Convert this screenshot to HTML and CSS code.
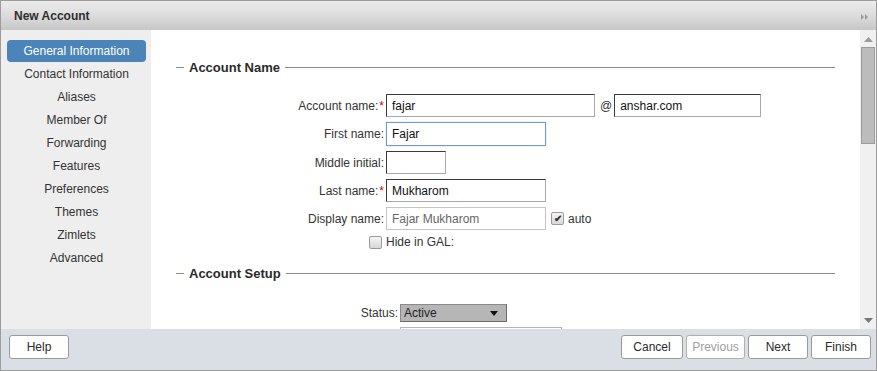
FILE: index.html
```
<!DOCTYPE html>
<html lang="en">
<head>
    <meta charset="UTF-8">
    <title>New Account</title>
    <link rel="stylesheet" href="styles.css">
</head>
<body>

    <div class="dialog">
        <!-- Title bar -->
        <div class="titlebar">
            <span class="title">New Account</span>
            <svg class="collapse" width="8" height="6" viewBox="0 0 8 6">
                <polygon points="0,0 3,3 0,6" fill="#9a9a9a"/>
                <polygon points="4,0 7,3 4,6" fill="#9a9a9a"/>
            </svg>
        </div>

        <div class="main">
            <!-- Wizard steps -->
            <ul class="steps">
                <li class="active">General Information</li>
                <li>Contact Information</li>
                <li>Aliases</li>
                <li>Member Of</li>
                <li>Forwarding</li>
                <li>Features</li>
                <li>Preferences</li>
                <li>Themes</li>
                <li>Zimlets</li>
                <li>Advanced</li>
            </ul>

            <div class="content">
                <div class="section-title"><span>Account Name</span></div>
                <div class="form-grid">
                    <label>Account name:<em>*</em></label>
                    <div class="field">
                        <input class="text w210" value="fajar">
                        <span class="at">@</span>
                        <input class="text w147" value="anshar.com">
                    </div>

                    <label>First name:</label>
                    <div class="field"><input class="text w160 focused" value="Fajar"></div>

                    <label>Middle initial:</label>
                    <div class="field"><input class="text w60" value=""></div>

                    <label>Last name:<em>*</em></label>
                    <div class="field"><input class="text w160" value="Mukharom"></div>

                    <label>Display name:</label>
                    <div class="field">
                        <input class="text w160 readonly" value="Fajar Mukharom">
                        <span class="check checked">&#10004;</span>
                        <span class="check-label">auto</span>
                    </div>

                    <div class="check-cell"><span class="check"></span></div>
                    <div class="field"><span class="plain">Hide in GAL:</span></div>
                </div>

                <div class="section-title setup"><span>Account Setup</span></div>
                <div class="form-grid wide">
                    <label>Status:</label>
                    <div class="field">
                        <div class="select">
                            <span>Active</span>
                            <svg width="8" height="5" viewBox="0 0 8 5"><polygon points="0,0 8,0 4,5" fill="#111"/></svg>
                        </div>
                    </div>

                    <label></label>
                    <div class="field"><input class="text w161 light" value=""></div>
                </div>
            </div>

            <!-- Scrollbar -->
            <div class="scrollbar">
                <svg class="arrow" width="9" height="5" viewBox="0 0 9 5"><polygon points="0,5 9,5 4.5,0" fill="#9a9a9a"/></svg>
                <div class="thumb"></div>
                <div class="track"></div>
                <svg class="arrow" width="9" height="5" viewBox="0 0 9 5"><polygon points="0,0 9,0 4.5,5" fill="#777"/></svg>
            </div>
        </div>

        <!-- Buttons -->
        <div class="footer">
            <button class="btn">Help</button>
            <div class="footer-right">
                <button class="btn w62">Cancel</button>
                <button class="btn w59 disabled">Previous</button>
                <button class="btn w60">Next</button>
                <button class="btn w60">Finish</button>
            </div>
        </div>
    </div>

</body>
</html>
```

FILE: styles.css
```
/* General */
body {
    margin: 0;
    padding: 0;
    font-family: 'Liberation Sans', Arial, sans-serif;
    font-size: 12px;
    color: #333;
    background: #fff;
}
.dialog {
    width: 877px;
    height: 371px;
    box-sizing: border-box;
    border: 1px solid #9c9c9c;
    display: flex;
    flex-direction: column;
    overflow: hidden;
}

/* Title bar */
.titlebar {
    height: 29px;
    flex: none;
    display: flex;
    align-items: center;
    justify-content: space-between;
    padding: 0 13px 0 13px;
    background: linear-gradient(#ececec 0%, #dcdcdc 50%, #c6c6c6 100%);
}
.title {
    font-weight: bold;
    font-size: 12px;
    color: #2e2e2e;
}
.collapse {
    margin-top: 2px;
    margin-right: -6px;
}

/* Main area */
.main {
    height: 299px;
    flex: none;
    display: flex;
}
.steps {
    width: 150px;
    flex: none;
    box-sizing: border-box;
    margin: 0;
    padding: 10px 5px 0 6px;
    list-style: none;
    background-color: #eeeeee;
}
.steps li {
    height: 22px;
    line-height: 22px;
    margin-bottom: 1px;
    text-align: center;
    color: #333;
    border-radius: 4px;
}
.steps li.active {
    background-color: #4a84b8;
    color: #fff;
}

.content {
    flex: 1;
    overflow: hidden;
    padding: 29px 25px 0 25px;
}
.section-title {
    display: flex;
    align-items: center;
    height: 16px;
    font-size: 13px;
    font-weight: bold;
    color: #2a2a2a;
}
.section-title::before {
    content: '';
    width: 8px;
    border-top: 1px solid #8c8c8c;
}
.section-title::after {
    content: '';
    flex: 1;
    border-top: 1px solid #8c8c8c;
}
.section-title span {
    padding: 0 5px;
}
.section-title.setup {
    margin-top: 16px;
}

/* Form rows */
.form-grid {
    display: grid;
    grid-template-columns: 208px auto;
    column-gap: 2px;
    row-gap: 5px;
    margin-top: 19px;
    align-items: center;
}
.form-grid.wide {
    grid-template-columns: 222px auto;
    margin-top: 23px;
}
.form-grid label {
    text-align: right;
    color: #333;
}
.form-grid label em {
    font-style: normal;
    color: #d00;
    margin-left: 1px;
}
.field {
    display: flex;
    align-items: center;
}
.text {
    box-sizing: border-box;
    height: 23px;
    padding: 0 5px;
    margin: 0;
    font-family: 'Liberation Sans', Arial, sans-serif;
    font-size: 12px;
    color: #111;
    background: #fff;
    border: 1px solid;
    border-color: #3a3a3a #a8a8a8 #a8a8a8 #3a3a3a;
    outline: none;
}
.text.focused {
    height: 24px;
    border-color: #6e9ad6;
    box-shadow: 0 0 1px #9ab9e6;
}
.text.readonly {
    color: #666;
    border-color: #c4c4c4;
}
.text.light {
    border-color: #b4b4b4;
}
.w210 { width: 209px; }
.w147 { width: 147px; }
.w160 { width: 160px; }
.w161 { width: 162px; }
.w60 { width: 60px; }
.at {
    margin: 0 2px 0 5px;
    color: #333;
}
.plain {
    color: #333;
}

/* Checkboxes */
.check {
    box-sizing: border-box;
    display: inline-block;
    width: 13px;
    height: 13px;
    border: 1px solid #9a9a9a;
    border-radius: 2px;
    background: linear-gradient(#f4f4f4, #d8d8d8);
    font-size: 10px;
    font-weight: bold;
    line-height: 11px;
    text-align: center;
    color: #333;
}
.field .check {
    margin-left: 5px;
}
.check-label {
    margin-left: 4px;
}
.check-cell {
    display: flex;
    justify-content: flex-end;
    padding-right: 2px;
}

/* Dropdown */
.select {
    box-sizing: border-box;
    width: 107px;
    height: 18px;
    display: flex;
    align-items: center;
    justify-content: space-between;
    padding: 0 8px 0 3px;
    background-color: #b6b6b6;
    border: 1px solid;
    border-color: #8a8a8a #6a6a6a #6a6a6a #8a8a8a;
    color: #222;
}

/* Scrollbar */
.scrollbar {
    width: 16px;
    flex: none;
    display: flex;
    flex-direction: column;
    align-items: center;
    background-color: #f0f0f0;
    padding: 7px 0 6px;
    box-sizing: border-box;
}
.scrollbar .arrow {
    flex: none;
}
.thumb {
    box-sizing: border-box;
    width: 14px;
    height: 97px;
    margin-top: 5px;
    background-color: #bcbcbc;
    border: 1px solid #9c9c9c;
}
.track {
    flex: 1;
}

/* Footer */
.footer {
    flex: 1;
    display: flex;
    justify-content: space-between;
    padding: 6px 5px 0 8px;
    background-color: #dadee5;
}
.footer-right {
    display: flex;
    gap: 3px;
    align-self: flex-start;
}
.btn {
    box-sizing: border-box;
    height: 24px;
    width: 60px;
    padding: 0;
    font-family: 'Liberation Sans', Arial, sans-serif;
    font-size: 12px;
    color: #2a2a2a;
    background-color: #fff;
    border: 1px solid #9a9a9a;
    border-radius: 3px;
    cursor: pointer;
}
.btn.w62 { width: 62px; }
.btn.w59 { width: 59px; }
.btn.w60 { width: 60px; }
.btn.disabled {
    color: #a0a0a0;
    border-color: #b0b0b0;
}
.footer > .btn {
    width: 60px;
}
```
